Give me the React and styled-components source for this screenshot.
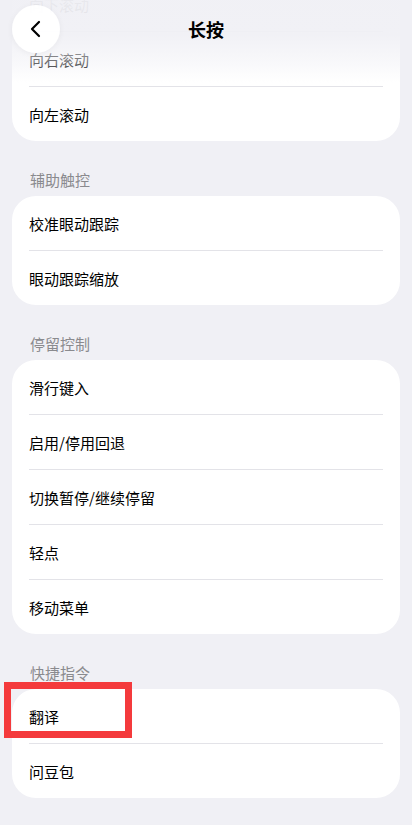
import { useLayoutEffect, useRef } from "react";
import styled, { createGlobalStyle } from "styled-components";

const GlobalStyle = createGlobalStyle`
  html, body {
    margin: 0;
    padding: 0;
    background: #f0f0f5;
    font-family: "Noto Sans CJK SC", "Noto Sans", sans-serif;
  }
  * { box-sizing: border-box; }
`;

const Screen = styled.div`
  position: relative;
  width: 412px;
  height: 825px;
  overflow: hidden;
  background: #f0f0f5;
`;

const Scroller = styled.div`
  height: 100%;
  overflow-y: auto;
  scrollbar-width: none;
  &::-webkit-scrollbar { display: none; }
`;

const Content = styled.div`
  padding: 12px 12px 60px;
`;

const SectionLabel = styled.div`
  margin: 30px 18px 7px;
  font-size: 15px;
  line-height: 18px;
  color: #8a8a8e;
`;

const Card = styled.div`
  background: #fff;
  border-radius: 24px;
  padding: 0 17px;
`;

const Row = styled.div`
  position: relative;
  display: flex;
  align-items: center;
  height: ${(p) => (p.$first ? 54 : 55)}px;
  font-size: 15px;
  color: #000;
  border-top: ${(p) => (p.$first ? "none" : "1px solid #e3e3e8")};
`;

const Highlight = styled.div`
  position: absolute;
  left: -25px;
  top: -7px;
  width: 128px;
  height: 56px;
  border: 7px solid #f43a3c;
  pointer-events: none;
`;

const Header = styled.div`
  position: absolute;
  top: 0;
  left: 0;
  right: 0;
  height: 92px;
  background: linear-gradient(
    to bottom,
    rgba(240, 240, 245, 0.97) 0%,
    rgba(240, 240, 245, 0.93) 38%,
    rgba(240, 240, 245, 0.45) 68%,
    rgba(240, 240, 245, 0) 90%
  );
  display: flex;
  justify-content: center;
  pointer-events: none;
`;

const Title = styled.div`
  margin-top: 18px;
  font-size: 18px;
  line-height: 22px;
  font-weight: 700;
  color: #000;
`;

const BackButton = styled.button`
  position: absolute;
  top: 5px;
  left: 12px;
  width: 48px;
  height: 48px;
  border: none;
  border-radius: 50%;
  background: rgba(255, 255, 255, 0.94);
  box-shadow: 0 1px 6px rgba(0, 0, 0, 0.05);
  display: flex;
  align-items: center;
  justify-content: center;
  padding: 0;
  pointer-events: auto;
`;

const sections = [
  { label: null, items: ["向上滚动", "向下滚动", "向右滚动", "向左滚动"] },
  { label: "辅助触控", items: ["校准眼动跟踪", "眼动跟踪缩放"] },
  {
    label: "停留控制",
    items: ["滑行键入", "启用/停用回退", "切换暂停/继续停留", "轻点", "移动菜单"],
  },
  { label: "快捷指令", items: ["翻译", "问豆包"], marked: "翻译" },
];

export default function App() {
  const scrollRef = useRef(null);

  useLayoutEffect(() => {
    if (scrollRef.current) scrollRef.current.scrollTop = 90;
  }, []);

  return (
    <Screen>
      <GlobalStyle />
      <Scroller ref={scrollRef}>
        <Content>
          {sections.map((s, i) => (
            <div key={i}>
              {s.label && <SectionLabel>{s.label}</SectionLabel>}
              <Card>
                {s.items.map((item, j) => (
                  <Row key={item} $first={j === 0}>
                    {item}
                    {s.marked === item && <Highlight />}
                  </Row>
                ))}
              </Card>
            </div>
          ))}
        </Content>
      </Scroller>
      <Header>
        <BackButton aria-label="返回">
          <svg width="14" height="18" viewBox="0 0 14 18" fill="none">
            <path
              d="M10 2 L3 9 L10 16"
              stroke="#000"
              strokeWidth="2.2"
              strokeLinecap="round"
              strokeLinejoin="round"
            />
          </svg>
        </BackButton>
        <Title>长按</Title>
      </Header>
    </Screen>
  );
}
